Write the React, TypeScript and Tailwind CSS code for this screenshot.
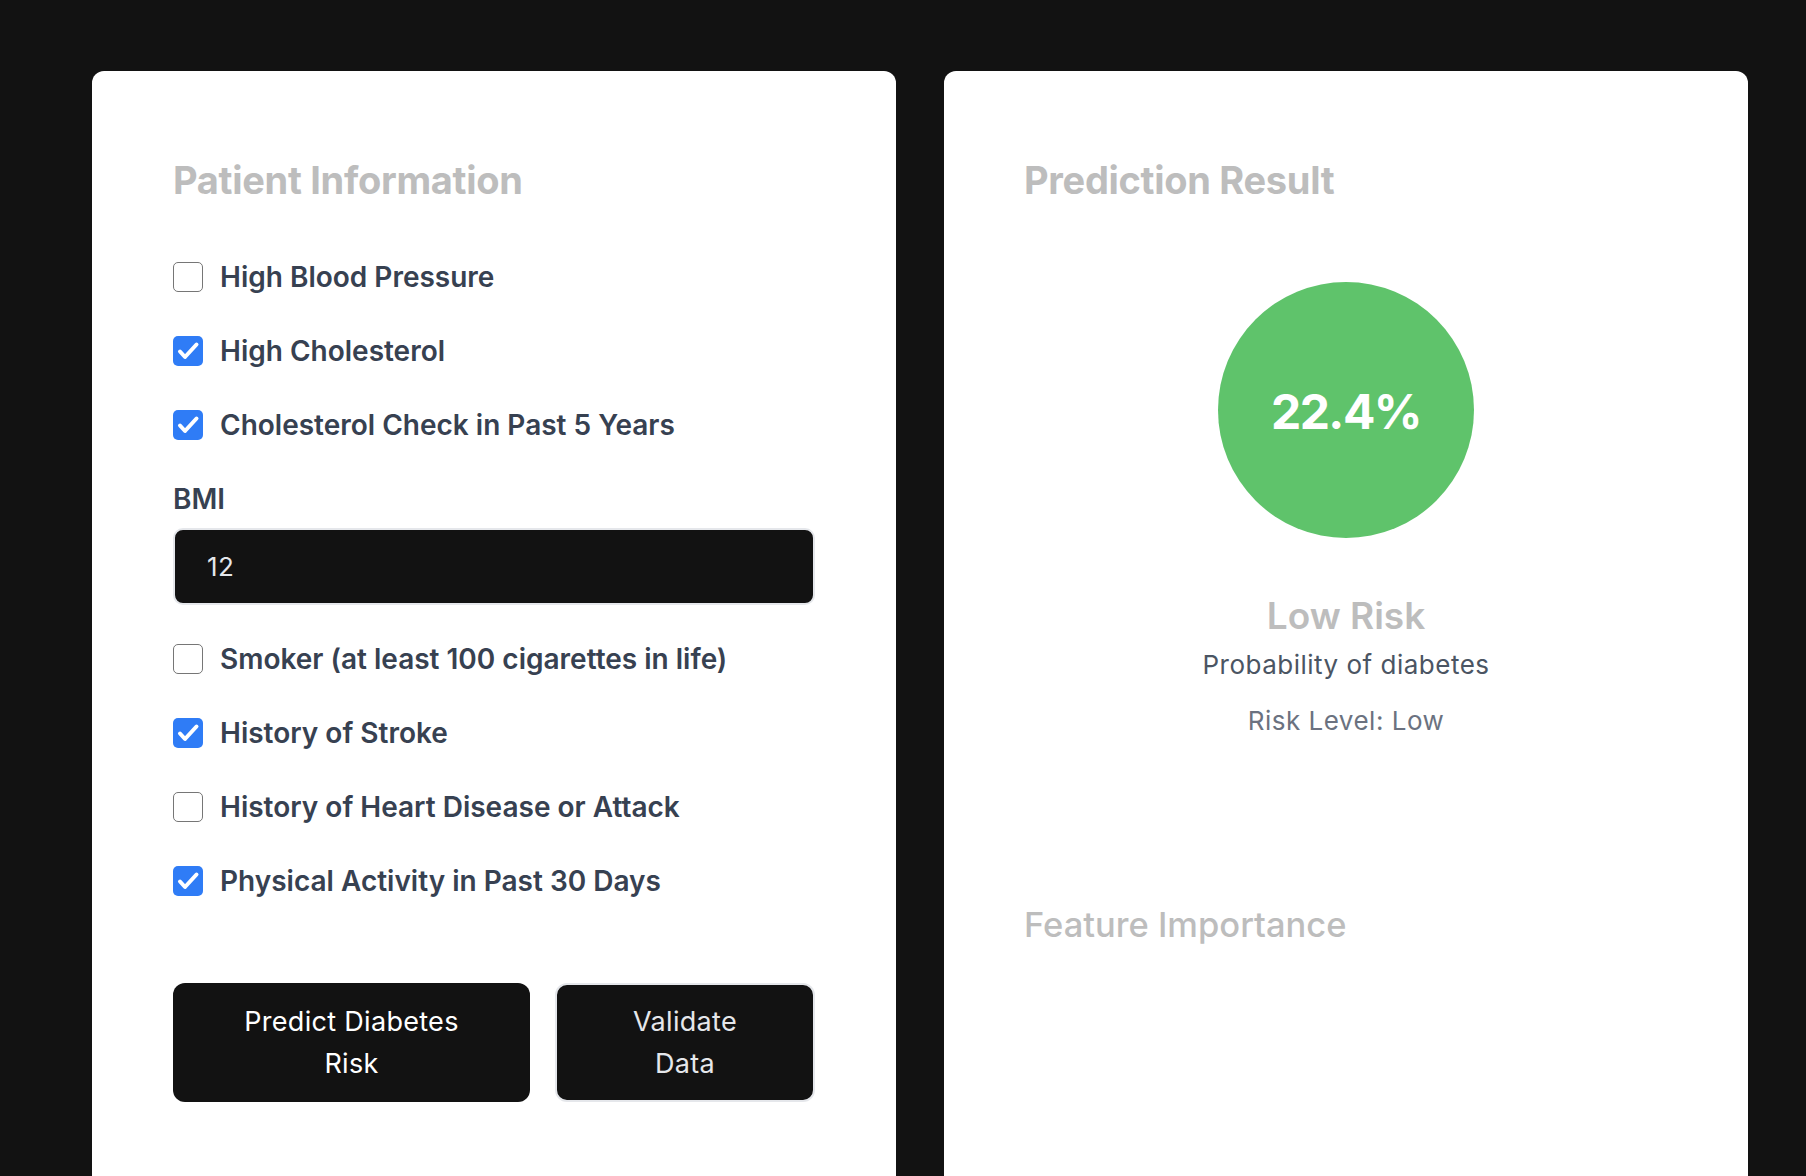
import React, { useState } from "react";

type Field = { key: string; label: string };

const topFields: Field[] = [
  { key: "highBP", label: "High Blood Pressure" },
  { key: "highChol", label: "High Cholesterol" },
  { key: "cholCheck", label: "Cholesterol Check in Past 5 Years" },
];

const bottomFields: Field[] = [
  { key: "smoker", label: "Smoker (at least 100 cigarettes in life)" },
  { key: "stroke", label: "History of Stroke" },
  { key: "heart", label: "History of Heart Disease or Attack" },
  { key: "physActivity", label: "Physical Activity in Past 30 Days" },
];

const CheckRow: React.FC<{
  label: string;
  checked: boolean;
  onToggle: () => void;
}> = ({ label, checked, onToggle }) => (
  <label className="flex h-[34px] cursor-pointer items-center gap-[17px]" onClick={onToggle}>
    {checked ? (
      <span className="flex h-[30px] w-[30px] shrink-0 items-center justify-center rounded-[5px] bg-[#2f7cf6]">
        <svg width="30" height="30" viewBox="0 0 30 30" fill="none">
          <path
            d="M7 15.5l5 5.5L23.5 8.5"
            stroke="white"
            strokeWidth="4"
            strokeLinecap="round"
            strokeLinejoin="round"
          />
        </svg>
      </span>
    ) : (
      <span className="h-[30px] w-[30px] shrink-0 rounded-[5px] border-[1.5px] border-[#767676] bg-white" />
    )}
    <span className="text-[28px] font-semibold leading-[34px] text-[#374151]">{label}</span>
  </label>
);

export default function App() {
  const [values, setValues] = useState<Record<string, boolean>>({
    highBP: false,
    highChol: true,
    cholCheck: true,
    smoker: false,
    stroke: true,
    heart: false,
    physActivity: true,
  });
  const [bmi, setBmi] = useState("12");

  const toggle = (key: string) => setValues((v) => ({ ...v, [key]: !v[key] }));

  return (
    <div
      className="flex h-[1176px] gap-[48px] overflow-hidden bg-[#121212] pl-[92px] pr-[58px] pt-[71px]"
      style={{ fontFamily: "Inter, 'Noto Sans', sans-serif" }}
    >
      {/* left card */}
      <div className="h-[1240px] w-[804px] shrink-0 rounded-[12px] bg-white pl-[81px] pr-[81px] pt-[86px]">
        <h2 className="text-[38px] font-bold leading-[46px] tracking-[-0.3px] text-[#bdbdbd]">
          Patient Information
        </h2>
        <div className="mt-[57px] flex flex-col gap-[40px]">
          {topFields.map((f) => (
            <CheckRow key={f.key} label={f.label} checked={values[f.key]} onToggle={() => toggle(f.key)} />
          ))}
          <div>
            <div className="text-[28px] font-semibold leading-[34px] text-[#374151]">BMI</div>
            <input
              value={bmi}
              onChange={(e) => setBmi(e.target.value)}
              className="mt-[12px] h-[77px] w-full rounded-[10px] border-2 border-[#e5e7eb] bg-[#121212] pl-[32px] text-[26px] tracking-[0.3px] text-[#e5e7eb] outline-none"
            />
          </div>
        </div>
        <div className="mt-[37px] flex flex-col gap-[40px]">
          {bottomFields.map((f) => (
            <CheckRow key={f.key} label={f.label} checked={values[f.key]} onToggle={() => toggle(f.key)} />
          ))}
        </div>
        <div className="mt-[85px] flex gap-[25px]">
          <button className="h-[119px] w-[357px] shrink-0 rounded-[12px] bg-[#121212] text-[27px] leading-[42px] tracking-[0.3px] text-white">
            <span className="block">Predict Diabetes</span>
            <span className="block">Risk</span>
          </button>
          <button className="h-[119px] w-[260px] shrink-0 rounded-[12px] border-2 border-[#e5e7eb] bg-[#121212] text-[27px] leading-[42px] tracking-[0.3px] text-[#e5e7eb]">
            <span className="block">Validate</span>
            <span className="block">Data</span>
          </button>
        </div>
      </div>

      {/* right card */}
      <div className="h-[1240px] w-[804px] shrink-0 rounded-[12px] bg-white px-[80px] pt-[86px]">
        <h2 className="text-[38px] font-bold leading-[46px] tracking-[-0.3px] text-[#bdbdbd]">
          Prediction Result
        </h2>
        <div className="mt-[79px] flex flex-col items-center">
          <div className="flex h-[256px] w-[256px] items-center justify-center rounded-full bg-[#5fc36b] pt-[4px]">
            <span className="text-[48px] font-bold tracking-[-1.5px] text-white">22.4%</span>
          </div>
          <div className="mt-[56px] text-[37px] font-semibold leading-[44px] text-[#bdbdbd]">Low Risk</div>
          <div className="mt-[11px] text-[26px] leading-[32px] tracking-[0.5px] text-[#4b5563]">
            Probability of diabetes
          </div>
          <div className="mt-[24px] text-[26px] leading-[32px] tracking-[0.5px] text-[#6b7280]">Risk Level: Low</div>
        </div>
        <h3 className="mt-[167px] text-[34.5px] font-medium leading-[42px] text-[#bdbdbd]">Feature Importance</h3>
      </div>
    </div>
  );
}
